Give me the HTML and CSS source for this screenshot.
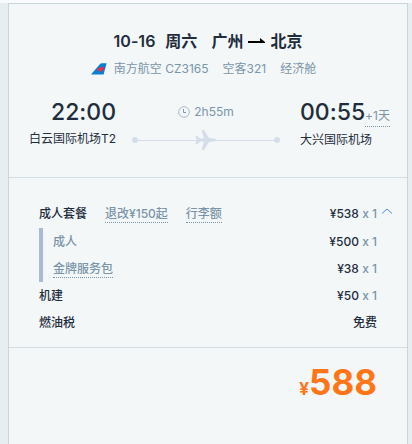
FILE: index.html
```html
<!DOCTYPE html>
<html lang="zh-CN">
<head>
<meta charset="utf-8">
<meta name="viewport" content="width=device-width, initial-scale=1">
<title>航班价格明细</title>
<link rel="stylesheet" href="styles.css">
</head>
<body>
<main class="card">
  <section class="flight">
    <h1 class="route">
      <span class="date">10-16</span>
      <span class="weekday">周六</span>
      <span>广州</span>
      <svg class="arrow" width="17" height="6" viewBox="0 0 17 6" aria-hidden="true"><path d="M0 3h12V0l5 4v1H0z" fill="#000"/></svg>
      <span>北京</span>
    </h1>
    <p class="meta">
      <span class="airline">
        <svg width="16" height="12" viewBox="0 0 16 12" aria-hidden="true"><path d="M0 11.6 8.6 1.4Q9.6.3 11 .3H15.6L12.6 11.6z" fill="#0b7fd0"/><path d="m9.600 3.300 1.800 1.300 1.600-.6-.7 3.200-1.700.6-.6 2-1.300-1.900-2.700-.4 1.200-2.500 1.400.1z" fill="#e8304f"/></svg>
        南方航空 CZ3165
      </span>
      <span>空客321</span>
      <span>经济舱</span>
    </p>
    <div class="times">
      <div class="depart">
        <div class="clock">22:00</div>
        <div class="airport">白云国际机场T2</div>
      </div>
      <div class="leg">
        <div class="duration">
          <svg width="12" height="12" viewBox="0 0 12 12" fill="none" aria-hidden="true"><circle cx="6" cy="6" r="5.300" stroke="#a9bccb"/><path d="M5.500 3v3.500H8" stroke="#7f99ae"/></svg>
          2h55m
        </div>
        <div class="track">
          <i class="dot"></i><i class="line"></i><i class="dot"></i>
          <svg class="plane" width="22" height="20" viewBox="0 0 22 20" aria-hidden="true"><path d="M.5 6H2.500L5 8.500H9L6.500 0H9L14 8 18.500 8.600Q21 9 22 10 21 11 18.500 11.400L14 12 9 20H6.500L9 11.500H5L2.500 14H.5L1.600 10z" fill="#d5dee8"/></svg>
        </div>
      </div>
      <div class="arrive">
        <div class="clock">00:55<span class="nextday">+1天</span></div>
        <div class="airport">大兴国际机场</div>
      </div>
    </div>
  </section>

  <section class="fees">
    <div class="row package">
      <span class="name">成人套餐<a class="note" href="#refund">退改¥150起</a><a class="note" href="#baggage">行李额</a></span>
      <span>¥538 <span class="qty">x 1</span></span>
      <button class="toggle" type="button" aria-label="收起明细">
        <svg width="12" height="6" viewBox="0 0 12 6" fill="none" aria-hidden="true"><path d="M1 5.500 6 1l5 4.500" stroke="#4d8df6"/></svg>
      </button>
    </div>
    <div class="breakdown">
      <div class="row"><span class="sub">成人</span><span>¥500 <span class="qty">x 1</span></span></div>
      <div class="row"><a class="note" href="#service">金牌服务包</a><span>¥38 <span class="qty">x 1</span></span></div>
    </div>
    <div class="row"><span class="name">机建</span><span>¥50 <span class="qty">x 1</span></span></div>
    <div class="row"><span class="name">燃油税</span><span>免费</span></div>
  </section>

  <div class="total"><span class="currency">¥</span>588</div>
</main>
</body>
</html>
```
FILE: styles.css
```css
* {
  box-sizing: border-box;
}

body {
  margin: 0;
  padding: 3px 4px 0 8px;
  min-height: 100vh;
  display: flex;
  background: linear-gradient(#f8fafb 3px, #e6eef1 3px);
  color: #1f2d3d;
  font: 12px/20px Inter, "Noto Sans CJK SC", sans-serif;
  font-feature-settings: "calt" 0;
}

.card {
  flex: 1;
  border: 1px solid #cbd5dc;
  border-bottom: 0;
  background: #f3f7f8;
}

.flight {
  padding: 25px 0 23px;
  border-bottom: 1px solid #d3dde4;
}

.route {
  display: flex;
  justify-content: center;
  align-items: center;
  gap: 5px;
  margin: 0;
  font-size: 16px;
  font-weight: 600;
  line-height: 24px;
}

.date {
  margin-right: 5px;
}

.weekday {
  margin-right: 9px;
}

.meta {
  display: flex;
  justify-content: center;
  gap: 14px;
  margin: 6px 0 19px;
  padding-right: 9px;
  color: #7b95a8;
}

.airline {
  display: flex;
  align-items: center;
  gap: 7px;
}

.times {
  display: grid;
  grid-template-columns: 107px 1fr 107px;
}

.depart {
  text-align: right;
}

.clock {
  margin-bottom: 3px;
  font-size: 23px;
  font-weight: 500;
  line-height: 28px;
  white-space: nowrap;
}

.nextday {
  display: inline-block;
  border-bottom: 1px dotted #7b95a8;
  color: #7b95a8;
  font-size: 12px;
  font-weight: 400;
  line-height: 20px;
}

.leg {
  padding: 0 20px 0 16px;
}

.duration {
  display: flex;
  justify-content: center;
  align-items: center;
  gap: 4px;
  height: 28px;
  color: #7b95a8;
}

.track {
  position: relative;
  display: flex;
  align-items: center;
  height: 28px;
}

.dot {
  width: 6px;
  height: 6px;
  border-radius: 50%;
  background: #d5dee8;
}

.line {
  flex: 1;
  height: 1px;
  background: #d5dee8;
}

.plane {
  position: absolute;
  top: 4px;
  left: 50%;
  margin-left: -11px;
}

.fees {
  padding: 22px 30px 11px;
  border-bottom: 1px solid #d3dde4;
  font-weight: 500;
}

.row {
  position: relative;
  display: flex;
  justify-content: space-between;
  align-items: baseline;
  line-height: 27px;
}

.package {
  margin-bottom: 1px;
}

.note {
  display: inline-block;
  border-bottom: 1px dotted #7b95a8;
  color: #7b95a8;
  line-height: 17px;
  text-decoration: none;
}

.name .note {
  margin-left: 18px;
}

.sub,
.qty {
  color: #7b95a8;
}

.breakdown {
  padding-left: 10px;
  border-left: 4px solid #a9bbd3;
}

.toggle {
  position: absolute;
  top: 8px;
  right: -16px;
  display: flex;
  padding: 0;
  border: 0;
  background: none;
  cursor: pointer;
}

.total {
  padding: 12px 30px;
  color: #ff7517;
  font-size: 35px;
  font-weight: 700;
  line-height: 44px;
  text-align: right;
}

.currency {
  font-size: 17px;
}
```
